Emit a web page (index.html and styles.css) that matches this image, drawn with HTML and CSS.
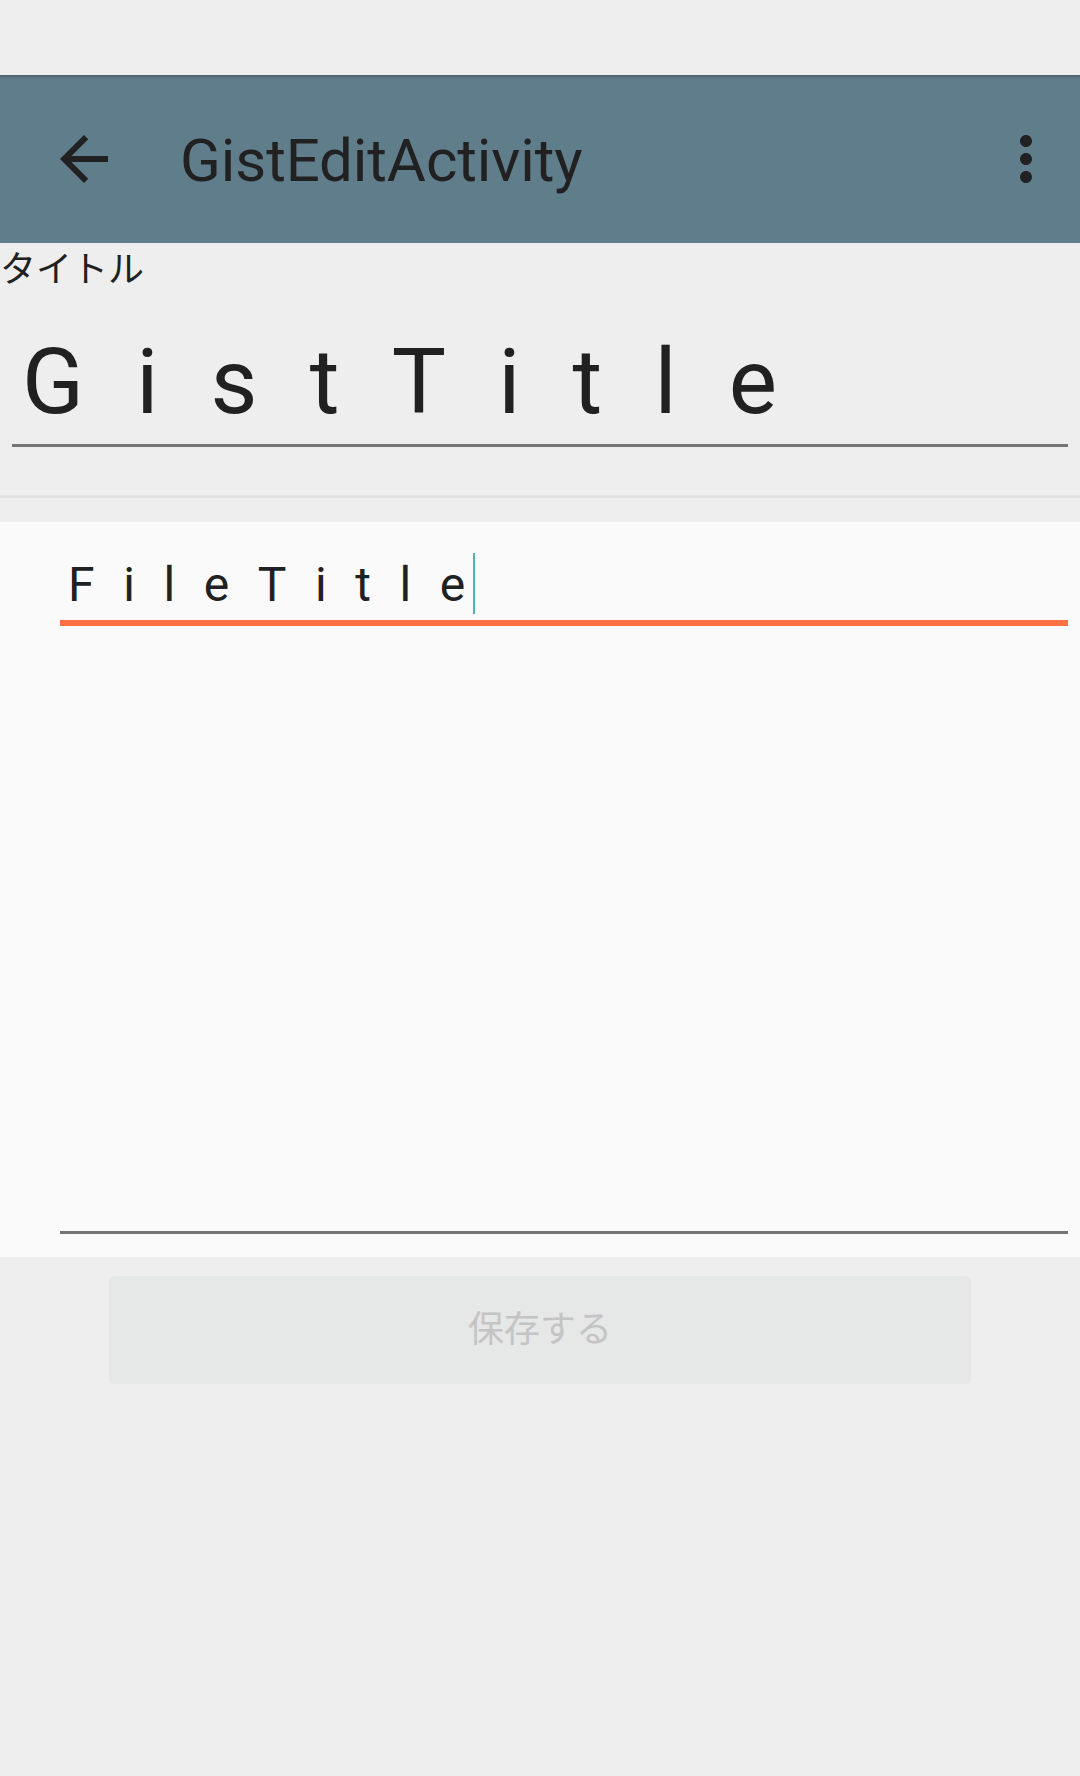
FILE: index.html
```html
<!DOCTYPE html>
<html lang="ja">
<head>
<meta charset="utf-8">
<title>GistEditActivity</title>
<link rel="stylesheet" href="styles.css">
</head>
<body>
<div class="screen">
  <div class="statusbar"></div>
  <header class="toolbar">
    <span class="icon-btn back">
      <svg viewBox="0 0 24 24" width="72" height="72"><path d="M20 11H7.83l5.59-5.59L12 4l-8 8 8 8 1.41-1.41L7.83 13H20v-2z" fill="#212121"/></svg>
    </span>
    <h1 class="toolbar-title">GistEditActivity</h1>
    <span class="icon-btn more">
      <svg viewBox="0 0 24 24" width="72" height="72"><path d="M12 8c1.1 0 2-.9 2-2s-.9-2-2-2-2 .9-2 2 .9 2 2 2zm0 2c-1.1 0-2 .9-2 2s.9 2 2 2 2-.9 2-2-.9-2-2-2zm0 6c-1.1 0-2 .9-2 2s.9 2 2 2 2-.9 2-2-.9-2-2-2z" fill="#212121"/></svg>
    </span>
  </header>
  <main class="content">
    <div class="label">タイトル</div>
    <div class="gist-field"><span class="gist-text">GistTitl</span><span class="gist-last">e</span></div>
    <div class="divider"></div>
    <section class="panel">
      <div class="file-field"><span class="file-text">FileTitl</span><span class="file-last">e</span><span class="cursor"></span></div>
      <div class="body-field"></div>
    </section>
    <div class="btn-row">
      <button class="save-btn" disabled>保存する</button>
    </div>
  </main>
</div>
</body>
</html>
```

FILE: styles.css
```css
html, body {
  margin: 0;
  padding: 0;
}
body {
  width: 1080px;
  height: 1776px;
  background: #eeeeee;
  font-family: Roboto, "Noto Sans CJK JP", sans-serif;
  color: #212121;
  overflow: hidden;
}
.screen {
  display: flex;
  flex-direction: column;
  height: 1776px;
}
.statusbar {
  height: 75px;
  background: #eeeeee;
}
.toolbar {
  height: 168px;
  background: linear-gradient(to bottom, rgba(0,0,0,0.22) 0, rgba(0,0,0,0.06) 3px, rgba(0,0,0,0) 5px), #607d8b;
  display: flex;
  align-items: center;
  padding: 0 18px 0 48px;
}
.icon-btn {
  width: 72px;
  height: 72px;
  display: flex;
}
.toolbar-title {
  margin: 0 0 0 60px;
  padding-top: 4px;
  flex: 1;
  font-family: Roboto, sans-serif;
  font-weight: 400;
  font-size: 60px;
  line-height: 72px;
  letter-spacing: -0.1px;
  color: #212121;
}
.content {
  display: flex;
  flex-direction: column;
}
.label {
  font-family: "Noto Sans CJK JP", sans-serif;
  font-size: 36px;
  line-height: 40px;
  height: 40px;
  padding-top: 3px;
  color: #212121;
}
.gist-field {
  margin: 0 12px;
  padding: 46px 0 12px 10px;
  font-family: Roboto, sans-serif;
  font-size: 91px;
  line-height: 100px;
  height: 100px;
  border-bottom: 3px solid #757575;
  white-space: nowrap;
}
.gist-text {
  letter-spacing: 52.2px;
}
.divider {
  margin-top: 48px;
  height: 3px;
  background: #e2e2e2;
}
.panel {
  margin-top: 24px;
  height: 735px;
  background: #fafafa;
  display: flex;
  flex-direction: column;
  padding: 31px 12px 23px 60px;
  box-sizing: border-box;
}
.file-field {
  padding: 0 0 3px 8px;
  font-family: Roboto, sans-serif;
  font-size: 48px;
  line-height: 64px;
  height: 64px;
  border-bottom: 6px solid #ff7043;
  white-space: nowrap;
  display: flex;
  align-items: flex-start;
}
.file-text {
  letter-spacing: 28.6px;
}
.cursor {
  display: inline-block;
  width: 2px;
  height: 61px;
  margin-left: 8px;
  background: #4db6ac;
}
.body-field {
  flex: 1;
  border-bottom: 3px solid #757575;
}
.btn-row {
  padding: 19px 109px 0 109px;
}
.save-btn {
  display: block;
  width: 100%;
  height: 108px;
  border: none;
  border-radius: 6px;
  background: #e6e7e7;
  color: #c4c4c4;
  font-family: "Noto Sans CJK JP", sans-serif;
  font-size: 36px;
  line-height: 100px;
  padding: 0 0 8px 0;
}
```
